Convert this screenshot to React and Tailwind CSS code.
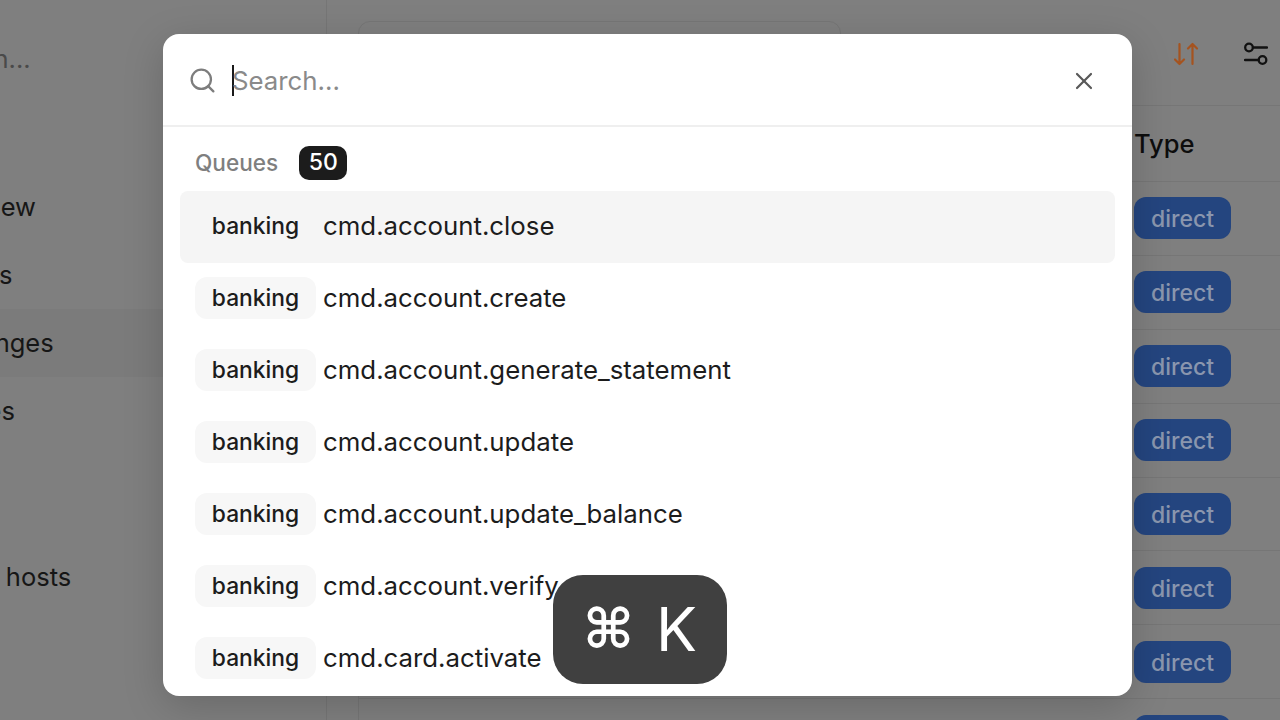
import { Search, X } from "lucide-react";

const navItems = [
  { label: "Overview" },
  { label: "Metrics" },
  { label: "Exchanges", active: true },
  { label: "Policies" },
];

const queues = [
  "cmd.account.close",
  "cmd.account.create",
  "cmd.account.generate_statement",
  "cmd.account.update",
  "cmd.account.update_balance",
  "cmd.account.verify",
  "cmd.card.activate",
];

const rowCount = 8;

const SortIcon = () => (
  <svg width="25" height="24" viewBox="0 0 25 24" fill="none" stroke="#a5531f" strokeWidth="2.2" strokeLinecap="round" strokeLinejoin="round">
    <path d="M5.5 2v20M1 17.5 5.5 22l4.5-4.5" />
    <path d="M18.5 22V2M14 6.5 18.5 2 23 6.5" />
  </svg>
);

const SlidersIcon = () => (
  <svg width="24" height="24" viewBox="0 0 24 24" fill="none" stroke="#111" strokeWidth="2.3" strokeLinecap="round">
    <circle cx="5" cy="5.5" r="3.8" />
    <path d="M9 5.5h14" />
    <circle cx="18.5" cy="18" r="3.8" />
    <path d="M1 18h13.5" />
  </svg>
);

const App = () => {
  return (
    <div className="relative h-[720px] w-[1280px] overflow-hidden bg-[#7f7f7f] font-['Inter',sans-serif]">
      <div className="flex h-full">
        <aside className="w-[327px] shrink-0 overflow-hidden border-r border-[#767676]">
          <p className="mt-[44px] -ml-[83px] text-[25.5px] leading-[30px] text-[#4a4a4a]">Domain...</p>
          <div className="mt-[99px]">
            {navItems.map((item) => (
              <div
                key={item.label}
                className={`-ml-[78px] flex h-[68px] items-center text-[25.5px] text-[#161616] ${item.active ? "bg-[#7b7b7b]" : ""}`}
              >
                {item.label}
              </div>
            ))}
          </div>
          <div className="mt-[98px] -ml-[79px] flex h-[68px] items-center text-[25.5px] text-[#161616]">
            Virtual hosts
          </div>
        </aside>

        <main className="flex min-w-0 flex-1 flex-col">
          <header className="flex h-[106px] shrink-0 items-start border-b border-[#767676] pl-[31px] pr-[12px] pt-[21px]">
            <div className="h-[60px] w-[483px] rounded-xl border border-[#767676]" />
            <div className="ml-auto mt-[21px] flex items-center gap-[45px]">
              <SortIcon />
              <SlidersIcon />
            </div>
          </header>

          <div className="ml-[31px] flex-1 border-l border-[#767676]">
            <div className="flex h-[76px] items-center border-b border-[#767676] pl-[775px] pt-[2px] text-[25.5px] font-medium text-[#0d0d0d]">
              Type
            </div>
            {Array.from({ length: rowCount }).map((_, idx) => (
              <div key={idx} className="flex h-[73.9px] items-center border-b border-[#767676] pl-[775px]">
                <span className="flex h-[42px] w-[97px] items-center justify-center rounded-xl bg-[#24457f] pt-[2px] text-[23px] font-medium text-[#8a96ae]">
                  direct
                </span>
              </div>
            ))}
          </div>
        </main>
      </div>

      {/* command palette */}
      <div className="absolute left-[163px] top-[34px] h-[662px] w-[969px] overflow-hidden rounded-[16px] bg-white shadow-[0_10px_40px_rgba(0,0,0,0.18)]">
        <div className="flex h-[93px] items-center border-b-2 border-[#efefef] pl-[25px] pr-[34px] pt-[2px]">
          <Search size={29} strokeWidth={1.9} className="text-[#7d7d7d]" />
          <div className="ml-[15px] -mr-[2px] h-[31px] w-[2px] bg-[#1a1a1a]" />
          <span className="pt-[2px] text-[25.8px] text-[#8a8a8a]">Search...</span>
          <X size={28} strokeWidth={1.9} className="ml-auto text-[#595959]" />
        </div>
        <div className="flex h-[64px] items-center gap-[21px] pb-[1px] pl-[32px] pt-[8px]">
          <span className="text-[22.6px] font-medium text-[#7f7f7f]">Queues</span>
          <span className="flex h-[34px] w-[48px] items-center justify-center rounded-[10px] bg-[#1c1c1c] text-[23px] font-medium text-white">
            50
          </span>
        </div>
        <div className="flex flex-col px-[17px]">
          {queues.map((name, idx) => (
            <div
              key={name}
              className={`flex h-[72px] items-center rounded-lg pb-[2px] pl-[15px] ${idx === 0 ? "bg-[#f5f5f5]" : ""}`}
            >
              <span
                className={`flex h-[42px] w-[121px] items-center justify-center rounded-xl text-[22.8px] font-medium text-[#1c1c1c] ${idx === 0 ? "" : "bg-[#f7f7f7]"}`}
              >
                banking
              </span>
              <span className="ml-[7px] text-[25.8px] text-[#1c1c1c]">{name}</span>
            </div>
          ))}
        </div>
      </div>

      {/* key hint */}
      <div className="absolute left-[553px] top-[575px] flex h-[109px] w-[174px] items-center justify-center gap-[22px] rounded-[30px] bg-[#404040] text-[61px] text-white">
        <span className="font-['DejaVu_Sans',sans-serif] text-[55px] font-bold">⌘</span>
        <span>K</span>
      </div>
    </div>
  );
};

export default App;
